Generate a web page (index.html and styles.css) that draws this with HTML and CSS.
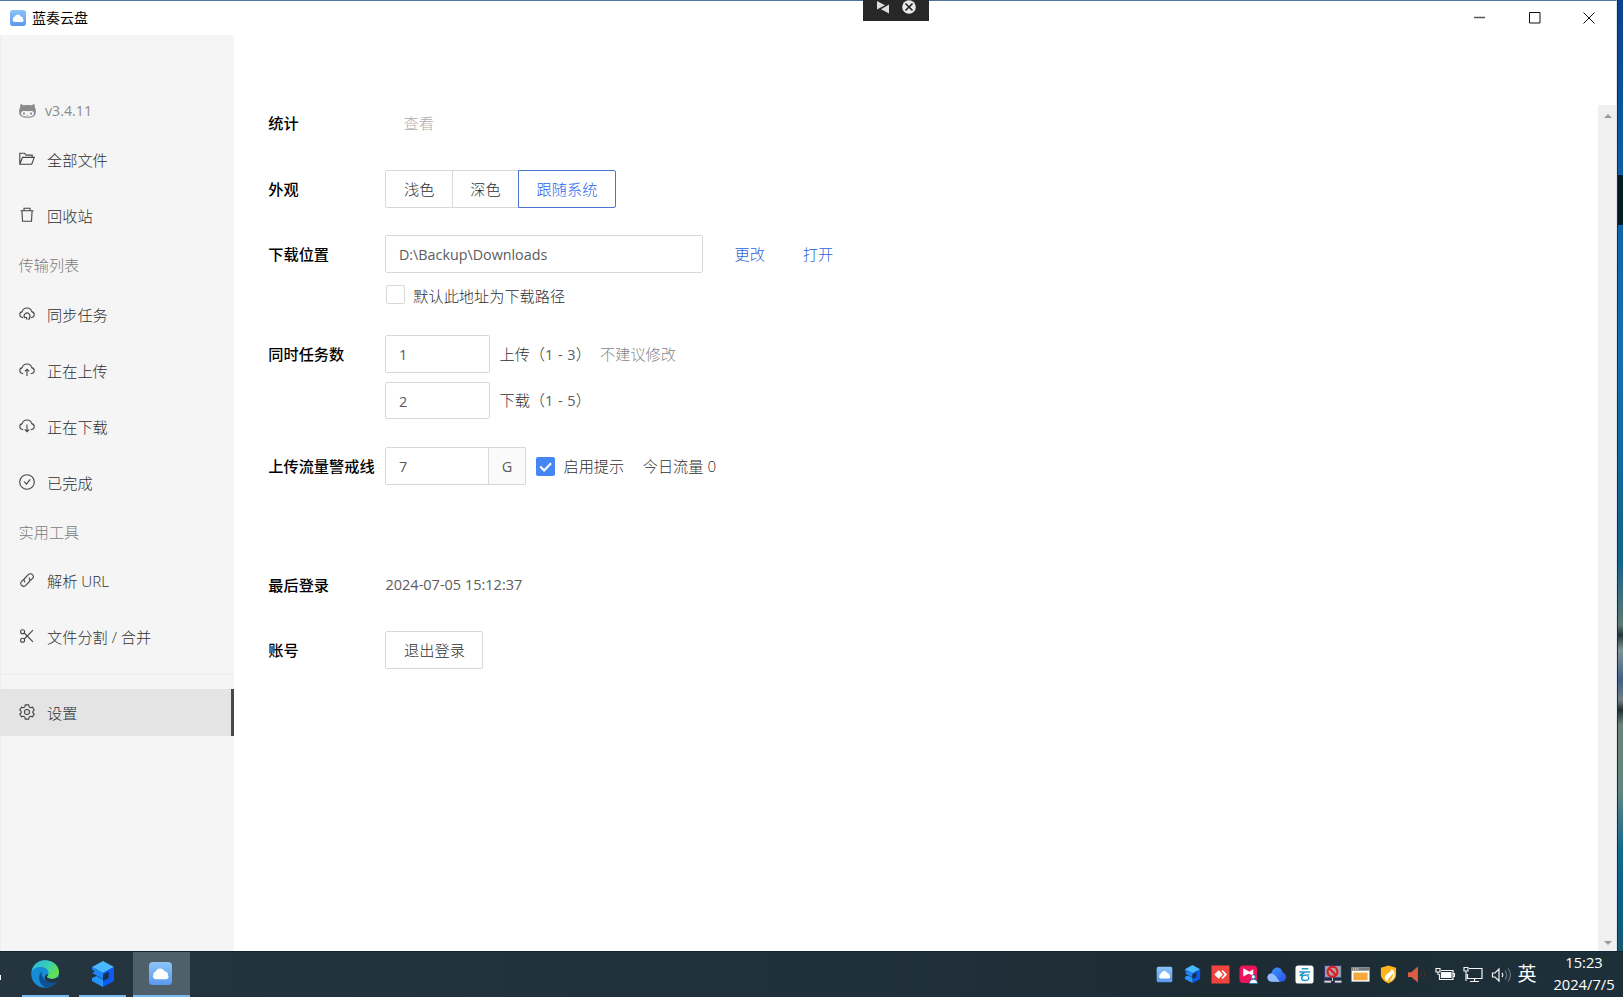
FILE: index.html
```
<!DOCTYPE html>
<html lang="zh-CN">
<head>
<meta charset="utf-8">
<title>蓝奏云盘</title>
<link rel="stylesheet" href="styles.css">
</head>
<body>
<svg class="defs" aria-hidden="true">
  <defs>
    <linearGradient id="sky" x1="0" y1="0" x2="0" y2="1"><stop offset="0" stop-color="#8cc5fa"/><stop offset="1" stop-color="#5a98ee"/></linearGradient>
    <linearGradient id="edgeG" x1="0" y1="0" x2="1" y2=".5"><stop offset="0" stop-color="#2bb4e8"/><stop offset=".6" stop-color="#38d0b0"/><stop offset="1" stop-color="#66e04a"/></linearGradient>
    <linearGradient id="cloudG" x1="0" y1="0" x2="1" y2="1"><stop offset="0" stop-color="#3ba0ff"/><stop offset="1" stop-color="#2a50e8"/></linearGradient>
    <symbol id="app" viewBox="0 0 24 24"><rect width="24" height="24" rx="4" fill="url(#sky)"/><path d="M7 18a3 3 0 0 1-2.500-4.500A3 3 0 0 1 7 10.300a5 5 0 0 1 9.300-.6 4 4 0 0 1 3.500 4A2.600 2.600 0 0 1 18 18z" fill="#fff"/></symbol>
    <symbol id="cube" viewBox="0 0 24 26"><path d="M12 0 23 6 12 12 1 6z" fill="#48b8ff"/><path d="M12 12 23 6v14l-11 6v-6l5.500-3v-6L12 14z" fill="#0b5bf0"/><path d="M1 6l11 6v6L1 12l3-1.800L1 8.500z" fill="#1c85ff"/><path d="M12 14l5.500-3v6L12 20z" fill="#17314d"/><path d="M1 12.500l11 5.800v1.500l-4 .5-7-4z" fill="#21333e"/><path d="M1 17l4.500-2L12 18.500V26L1 20z" fill="#2395ff"/></symbol>
    <symbol id="cloud" viewBox="0 0 16 16"><path d="M4.200 11.700C2 11.500.8 10.200.8 8.600c0-1.500 1-2.600 2.400-3C3.900 3.400 5.700 2 8 2s4.100 1.400 4.800 3.600c1.400.4 2.400 1.500 2.400 3 0 1.600-1.200 2.900-3.400 3.100"/></symbol>
  </defs>
</svg>
<div class="desktop">
  <div class="window">
    <header class="titlebar">
      <svg class="app-icon"><use href="#app"/></svg>
      <span class="app-name">蓝奏云盘</span>
      <div class="controls">
        <svg viewBox="0 0 12 12"><path d="M0 5.500h11" stroke="#555" stroke-width="1.500"/></svg>
        <svg viewBox="0 0 12 12"><path d="M.5.500h10.500v10.500h-10.500z"/></svg>
        <svg viewBox="0 0 12 12"><path d="M.5.500l11 11M11.500.500l-11 11"/></svg>
      </div>
    </header>
    <div class="body">
      <nav class="sidebar">
        <div class="version">
          <svg viewBox="0 0 17 14"><path d="M1.500.200C2.900.2 4 .9 4.700 1.400c2.400-.4 5.200-.4 7.600 0C13 .9 14.100.200 15.500.200c.5 1.300.5 2.300.2 3.200 1 1.100 1.200 2.300 1.200 4C16.900 12 13.800 13.800 8.500 13.800S.1 12 .1 7.400c0-1.700.3-2.900 1.200-4C1 2.500 1 1.500 1.500.200z" fill="#8b8b8b"/><path d="M3.600 7.300c1.400-.5 3.200-.1 4.900-.1s3.500-.4 4.900.1c1 .4 1.500 1 1.500 2 0 2.600-2.700 3.400-6.400 3.400S2.100 11.900 2.100 9.300c0-1 .5-1.600 1.500-2z" fill="#f5f5f5"/><ellipse cx="5" cy="9.600" rx=".9" ry="1.400" fill="#8b8b8b"/><ellipse cx="12" cy="9.600" rx=".9" ry="1.400" fill="#8b8b8b"/><path d="M7.700 11.400h1.600" stroke="#8b8b8b" stroke-width=".7"/></svg>
          <span class="latin">v3.4.11</span>
        </div>
        <a class="item"><svg class="ico" viewBox="0 0 16 16"><path d="M.8 13.300V2.300h4.700l1.700 1.800h6v2.300M.8 13.300 3.500 6.400h11.800l-2.600 6.900z"/></svg><span>全部文件</span></a>
        <a class="item"><svg class="ico" viewBox="0 0 16 16"><path d="M1.500 3.700h13M5 3.700V1.300h6v2.400M2.900 3.700l.6 10.500h9l.6-10.500"/></svg><span>回收站</span></a>
        <div class="group">传输列表</div>
        <a class="item"><svg class="ico" viewBox="0 0 16 16"><use href="#cloud"/><path d="M5.800 11.800a2.900 2.900 0 1 1 4.400 0M5.500 11.500h2v2M10.500 10.500v2.500h-2"/></svg><span>同步任务</span></a>
        <a class="item"><svg class="ico" viewBox="0 0 16 16"><use href="#cloud"/><path d="M8 14V7.200M5.800 9.400 8 7.200l2.200 2.200"/></svg><span>正在上传</span></a>
        <a class="item"><svg class="ico" viewBox="0 0 16 16"><use href="#cloud"/><path d="M8 6.500v7M5.800 11.400 8 13.600l2.200-2.200"/></svg><span>正在下载</span></a>
        <a class="item"><svg class="ico" viewBox="0 0 16 16"><circle cx="8" cy="8" r="7.300"/><path d="M5 7.500l2.400 2.700L11.200 5.300"/></svg><span>已完成</span></a>
        <div class="group second">实用工具</div>
        <a class="item"><svg class="ico" viewBox="0 0 16 16"><path d="M6.200 10.300C4.600 8.700 4.800 7.200 6 6l3.200-3.300c1.300-1.300 3-1.300 4.200-.1s1.200 2.900 0 4.100l-2 2M9.800 5.700c1.600 1.600 1.400 3.100.2 4.300l-3.200 3.300c-1.300 1.300-3 1.300-4.200.1s-1.200-2.900 0-4.100l2-2"/></svg><span>解析 URL</span></a>
        <a class="item"><svg class="ico" viewBox="0 0 16 16"><circle cx="3.600" cy="3.800" r="2"/><circle cx="3.600" cy="12.200" r="2"/><path d="M5.300 5 14 13.800M5.300 11 14 2.200"/></svg><span>文件分割 / 合并</span></a>
        <div class="divider"></div>
        <a class="item active"><svg class="ico" viewBox="0 0 16 16"><path d="M6.300.9h3.400l.5 2 1.300.8 2-.6 1.700 2.900L13.800 7.400v1.300l1.400 1.300-1.700 2.900-2-.6-1.300.8-.5 2H6.300l-.5-2-1.300-.8-2 .6L.8 10l1.400-1.300V7.400L.8 6l1.700-2.900 2 .6 1.300-.8z"/><circle cx="8" cy="8" r="2.500"/></svg><span>设置</span></a>
      </nav>
      <main class="content">
        <div class="form">
          <section class="row"><b>统计</b><span class="text-btn muted">查看</span></section>
          <section class="row"><b>外观</b>
            <div class="segmented"><button>浅色</button><button>深色</button><button class="on">跟随系统</button></div>
          </section>
          <section class="row location"><b>下载位置</b>
            <div class="field path latin">D:\Backup\Downloads</div><a class="link">更改</a><a class="link">打开</a>
          </section>
          <div class="subrow"><i class="check"></i><span>默认此地址为下载路径</span></div>
          <section class="row tasks"><b>同时任务数</b>
            <div class="field num latin">1</div><span class="hint">上传（<span class="latin">1 - 3</span>）</span><span class="note">不建议修改</span>
          </section>
          <section class="row"><b></b><div class="field num latin">2</div><span class="hint">下载（<span class="latin">1 - 5</span>）</span></section>
          <section class="row"><b>上传流量警戒线</b>
            <div class="field limit latin">7</div><div class="unit latin">G</div>
            <i class="check checked"><svg viewBox="0 0 18 18"><path d="M4 9l3.700 3.700L14.300 6"/></svg></i>
            <span class="tip">启用提示</span><span class="today">今日流量 0</span>
          </section>
          <section class="row last"><b>最后登录</b><span class="latin">2024-07-05 15:12:37</span></section>
          <section class="row"><b>账号</b><button class="logout">退出登录</button></section>
        </div>
        <div class="scrollbar"><i class="up"></i><i class="down"></i></div>
      </main>
    </div>
  </div>
  <div class="wallpaper"><div class="peek"></div></div>
  <div class="floating">
    <svg viewBox="0 0 66 21"><path d="M14 1v8.500l8-4.300z" fill="#ddd"/><path d="M26 4.500V13.500l-8-4.200z" fill="#ddd"/><circle cx="46" cy="7" r="6.800" fill="#e8e8e8"/><path d="M42.500 3.500l7 7m0-7-7 7" stroke="#222" stroke-width="1.600"/></svg>
  </div>
</div>
<footer class="taskbar">
  <div class="sliver"></div>
  <div class="task edge"><svg viewBox="0 0 28 28"><circle cx="14" cy="14" r="13.800" fill="#168bd6"/><path d="M.5 12C1.500 5 7 .2 14 .2c8 0 14 5.500 14 11.800 0 4.200-3.200 6.800-7 6.800-3.200 0-5-1-5-2.300 0-1 1.500-1.500 1.500-3.800C17.500 9.500 14 7 10 7 5.500 7 2 9 .5 12z" fill="url(#edgeG)"/><path d="M10.500 11.500c-4.500 4.500-2.500 14.500 5 16.200 5.500-.4 9.500-3.700 11.200-7.200-8 3.500-16.500 0-16.200-9z" fill="#124f93"/><path d="M17.300 14.500c-.5 1-1.300 1.400-1.300 2.200 0 1.500 2.500 2.400 5.500 2.200 2.500-.2 4-1 5.200-2 1 .7.500 2.700-.5 4.600-6 2-12 .5-12.500-4 0-2 1-3.500 3.600-3z" fill="#21333e"/></svg></div>
  <div class="task boxes"><svg viewBox="0 0 24 26"><use href="#cube"/></svg></div>
  <div class="task current"><svg viewBox="0 0 24 24"><use href="#app"/></svg></div>
  <div class="tray">
    <svg viewBox="0 0 20 20"><use href="#app" x="1.500" y="1.500" width="17" height="17"/></svg>
    <svg viewBox="0 0 20 20"><use href="#cube" x="1" y="0" width="18" height="19"/></svg>
    <svg viewBox="0 0 20 20"><path d="M.5.500h19v19H.5z" fill="#f0443c"/><path d="M8 5.500l4.500 4.500L8 14.500 3.500 10z" fill="#fff"/><path d="M11 6.500l1.200-1.200 4.800 4.700-4.800 4.700L11 13.500l3.400-3.500z" fill="#fff"/></svg>
    <svg viewBox="0 0 20 20"><rect x=".5" y=".5" width="18.500" height="18.500" rx="4" fill="#ed1459"/><path d="M4.500 3.500v8.500l8-4.200z" fill="#fff"/><path d="M15 4.500v7L9 8.500z" fill="#fff"/><circle cx="15" cy="12.500" r="2.200" fill="#fff" stroke="#2476b8"/><path d="M11 19.500c0-6 8.500-6 8.500 0z" fill="#fff" stroke="#2476b8"/></svg>
    <svg viewBox="0 0 20 20"><path d="M5 17.500C1.500 17.500.5 15 .5 13s1.500-4 4-4C5.500 5 8 2.500 11 2.500c3.500 0 5 3 5.500 5.500 2 .5 3.500 2.500 3.500 5 0 3-2 4.500-4.500 4.500z" fill="url(#cloudG)"/><path d="M5 17.500C1.500 17.500.5 15 .5 13s1.500-4 4-4c4 0 6 5 9 8.500z" fill="#92baff"/></svg>
    <svg viewBox="0 0 20 20"><rect x=".5" y=".5" width="19" height="19" rx="3" fill="#fff"/><path d="M7 4h7M4.500 7.300h11.500M10 7.500C9 9.500 5.500 9.500 5.500 11c3 .5 7-1 9.500-.5M8.500 11c-3.500 4-.5 5.800 3 5.300s4-3.300 1.500-4.300" fill="none" stroke="#2796c8" stroke-width="1.500"/></svg>
    <svg viewBox="0 0 20 20"><path d="M1.500.5h18v13h-18z" fill="#8e97ac" stroke="#2b3272"/><path d="M3 2h14.500v10H3z" fill="#a9a2a7"/><path d="M1 16h8v3H1zM12 16h8v3h-8z" fill="#ddd" stroke="#31375b"/><path d="M10 13v4" stroke="#ddd"/><circle cx="10" cy="7" r="5.200" fill="none" stroke="#df171e" stroke-width="2.200"/><path d="M6.500 3.500l7 7" stroke="#df171e" stroke-width="2.200"/></svg>
    <svg viewBox="0 0 20 20"><path d="M.5 2.500h19v15H.5z" fill="#fff"/><path d="M.5 2.500h19V6H.5z" fill="#777"/><path d="M2 4.200h6" stroke="#fff" stroke-width="1.200" stroke-dasharray="1.300 1"/><path d="M2.500 8h15v8h-15z" fill="#f7a83a"/></svg>
    <svg viewBox="0 0 20 20"><path d="M10 .5 18 3v7c0 4-3 7-8 9.500C5 17 2 14 2 10V3z" fill="#ffb31c"/><path d="M13 4c.3 4-6.500 5-7 9.500-.2 2 1.500 3 3 3.500 0-3 5-5 5-8.500 2 4-1 6-3 8.500 4-1 6-4 5.300-8C16 7 15 5 13 4z" fill="#fff"/></svg>
    <svg viewBox="0 0 20 20"><path d="M1 7.500h3.500L11.500 1.500v17L4.500 12.500H1z" fill="#dd5e45"/><path d="M14 7c1.500 2 1.500 4 0 6M17 5c2 3 2 7 0 10" fill="none" stroke="#40302f" stroke-width="1.200"/></svg>
  </div>
  <div class="system">
    <svg viewBox="0 0 20 20"><path d="M6 5.500h12v9H4.500V9M18 8.500h1.500v3H18M1 3.500h4v3.500H1zM3 7v3"/><path d="M6.500 7.500h9.500v5H6.500z" fill="#fff"/></svg>
    <svg viewBox="0 0 20 20"><path d="M6 3.500h13v10H4.500V9M11.500 13.500v3M7 16.500h9M1 2.500h4v3.500H1zM3 6v10"/></svg>
    <svg viewBox="0 0 20 20"><path d="M1.500 8h2.500l4-4v12l-4-4H1.500zM11 8c1 1 1 3 0 4"/><path d="M14 5.500c2.300 2.500 2.300 6.500 0 9M17 3.500c3 4 3 9 0 13" stroke="#667277"/></svg>
  </div>
  <span class="ime">英</span>
  <div class="clock"><span>15:23</span><span>2024/7/5</span></div>
</footer>
</body>
</html>
```
FILE: styles.css
```
* { box-sizing: border-box; }
body {
  margin: 0;
  width: 1623px;
  height: 997px;
  overflow: hidden;
  font: 300 15.2px/22px "Open Sans", "Noto Sans CJK SC", sans-serif;
  color: #303030;
}
.defs { position: absolute; width: 0; height: 0; }
.desktop { position: relative; display: flex; height: 951px; }
.window {
  width: 1617px;
  border-top: 1px solid #5173a0;
  border-right: 1px solid #dde3e8;
  background: #fff;
  display: flex;
  flex-direction: column;
}
.titlebar { height: 34px; display: flex; align-items: center; padding-left: 10px; }
.app-icon { width: 16px; height: 16px; }
.app-name { margin-left: 6px; font-size: 14px; font-weight: 400; color: #000; }
.controls { margin-left: auto; display: flex; gap: 42.500px; padding-right: 21px; margin-top: -1px; }
.controls svg { width: 12px; height: 12px; fill: none; stroke: #111; stroke-width: 1; }
.body { flex: 1; display: flex; }

.sidebar { width: 233.500px; padding-top: 54px; background: #f5f5f5; border-left: 1px solid #e9eef2; }
.version { height: 43px; padding-left: 18px; display: flex; align-items: center; gap: 9px; color: #8b8b8b; }
.version svg { width: 17px; height: 14px; }
.item { height: 47px; margin: 4px 0 9px; padding-left: 18px; display: flex; align-items: center; gap: 12px; }
.item + .item { margin-top: 0; }
.ico { width: 16px; height: 16px; fill: none; stroke: #444; stroke-width: 1.1; margin-top: -1px; }
.group { height: 44px; margin-top: -5px; padding-left: 17.500px; line-height: 44px; color: #7c7c7c; }
.group.second { height: 43px; }
.divider { height: 1px; margin: 14px 0; background: #ededed; }
.item.active { margin: 0 0 0 -1px; padding-left: 19px; background: #e4e4e4; border-right: 3px solid #484848; }

.content { flex: 1; display: flex; margin-top: 69px; }
.form { flex: 1; padding-left: 34.800px; }
.row { height: 38px; margin-bottom: 27.500px; display: flex; align-items: center; }
.row b { width: 117.200px; flex: none; font-weight: 500; color: #000; white-space: nowrap; }
.text-btn { padding-left: 18px; }
.muted { color: #adadad; }
.latin { font-size: 14.500px; font-weight: 400; color: #5c5c5c; }
.version .latin { font-size: 14.200px; color: #8b8b8b; }
button { font: inherit; color: inherit; background: #fff; border: 1px solid #d9d9d9; padding: 0; height: 38px; }
.segmented { display: flex; }
.segmented button { width: 67.500px; border-radius: 2px 0 0 2px; }
.segmented button + button { width: 67px; margin-left: -1px; border-radius: 0; }
.segmented .on { width: 98px !important; border-color: #4a77cc; color: #2b65ee; border-radius: 0 2px 2px 0 !important; }
.field { height: 37.500px; padding-left: 12.500px; border: 1px solid #d9d9d9; border-radius: 2px; line-height: 37px; }
.path { width: 317.500px; font-size: 14.300px; }
.link { margin-left: 31.500px; color: #2b61d6; }
.link + .link { margin-left: 38px; }
.row.location { margin-bottom: 10.500px; }
.subrow { display: flex; align-items: center; height: 24px; gap: 8.500px; margin: 0 0 27.700px 117.500px; }
.check { width: 19px; height: 19px; flex: none; border: 1px solid #d9d9d9; border-radius: 2px; }
.subrow .check { margin-top: -2px; }
.row.tasks { margin-bottom: 8.500px; }
.num { width: 104.500px; }
.hint { margin-left: 9.500px; }
.hint .latin { letter-spacing: .4px; }
.note { margin-left: 9px; color: #858585; }
.limit { width: 103.500px; border-radius: 2px 0 0 2px; }
.unit { width: 38px; height: 37.500px; margin-left: -1px; border: 1px solid #d9d9d9; background: #fafafa; text-align: center; line-height: 37px; }
.checked { margin-left: 10px; background: #4586f5; border: 0; }
.checked svg { display: block; fill: none; stroke: #fff; stroke-width: 2; }
.tip { margin-left: 8.500px; }
.today { margin-left: 18.500px; }
.last { margin-top: 80.500px; }
.logout { width: 98px; border-radius: 2px; }
.scrollbar { width: 18px; margin-top: 1px; background: #f0f0f0; display: flex; flex-direction: column; justify-content: space-between; align-items: center; padding: 9px 0 6px 2px; }
.scrollbar i { border: 4.500px solid transparent; }
.up { border-top: 0 !important; border-bottom-color: #9a9a9a !important; }
.down { border-bottom: 0 !important; border-top-color: #9a9a9a !important; }

.wallpaper {
  width: 6px;
  border-left: 1px solid #123047;
  padding-top: 175px;
  background: linear-gradient(#084390 0, #1262a5 200px, #1570b0 350px, #15628c 560px, #5d7a75 625px, #23343b 635px, #809495 650px, #42618a 680px, #707f83 700px, #1f3034 710px, #6d8276 725px, #62877e 790px, #146991 850px, #0c5d8a 900px, #155970);
}
.peek { height: 50px; background: #071923; }
.floating { position: absolute; left: 863px; top: 0; width: 66px; height: 21px; background: #272727; }
.floating svg { display: block; width: 66px; height: 21px; }

.taskbar { height: 46px; display: flex; align-items: center; background: linear-gradient(90deg, #24353f, #20303a 55%, #1d2b33 75%, #1d303a); border-top: 1px solid #14242c; }
.sliver { width: 1px; height: 5px; background: #fff; margin: 5px 21px 0 0; }
.task { height: 45px; width: 47px; display: flex; align-items: center; justify-content: center; border-bottom: 2px solid #76b9ed; margin-right: 10px; }
.edge svg { width: 28px; height: 28px; margin-right: 1px; }
.boxes svg { width: 24px; height: 26px; }
.current { width: 57px; margin-left: -3px; background: #50606a; }
.current svg { width: 23px; height: 23px; margin-right: 2px; }
.tray { display: flex; margin-left: auto; gap: 9px; }
.tray svg { width: 19px; height: 19px; }
.system { display: flex; gap: 8px; margin-left: 9px; }
.system svg { width: 20px; height: 20px; fill: none; stroke: #f4f4f4; stroke-width: 1.200; }
.ime { margin-left: 6.500px; width: 20px; font-size: 19px; font-weight: 400; color: #fff; margin-top: -2px; }
.clock { width: 78px; margin: -2px 0 0 7.500px; display: flex; flex-direction: column; align-items: center; font-size: 14.700px; font-weight: 400; line-height: 21.500px; color: #fff; }
```
